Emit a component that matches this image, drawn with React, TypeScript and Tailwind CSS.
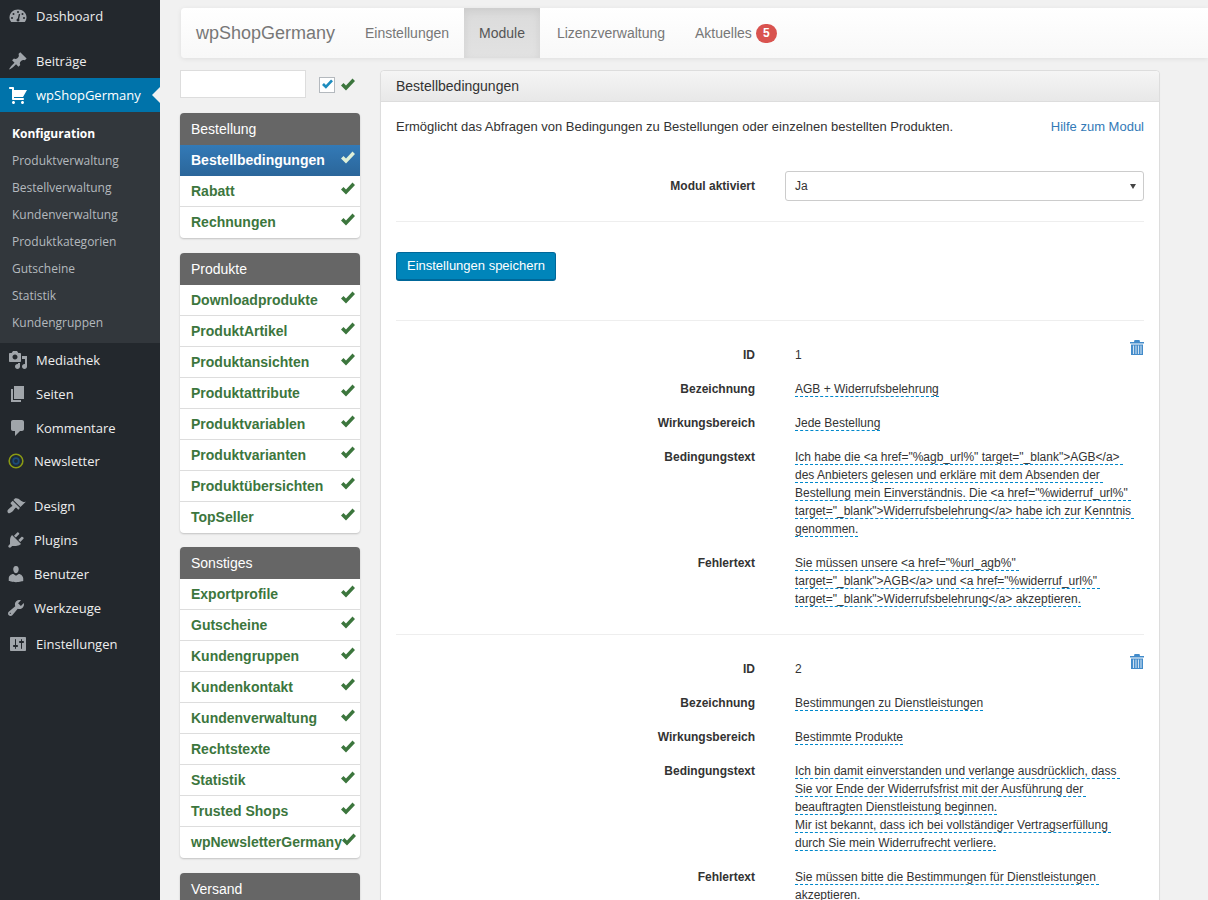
// App.tsx - wpShopGermany module settings page
import type { ReactNode } from "react";

// WordPress admin menu glyphs, 20x20 grid
const menuIcons: Record<string, string> = {
  post: "M10.44 3.02l1.82-1.82 6.36 6.35-1.83 1.82c-1.05-.68-2.48-.57-3.41.36l-.75.75c-.92.93-1.04 2.35-.35 3.41l-1.83 1.82-2.41-2.41-2.8 2.79c-.42.42-3.38 2.71-3.8 2.29s1.86-3.39 2.28-3.81l2.79-2.79L4.1 9.36l1.83-1.82c1.05.69 2.48.57 3.4-.36l.75-.75c.93-.92 1.05-2.35.36-3.41z",
  cart: "M6 13h9c.55 0 1 .45 1 1s-.45 1-1 1H5c-.55 0-1-.45-1-1V4H2c-.55 0-1-.45-1-1s.45-1 1-1h3c.55 0 1 .45 1 1v2h13l-4 7H6v1zm-.5 3c.83 0 1.5.67 1.5 1.5S6.33 19 5.5 19 4 18.33 4 17.5 4.67 16 5.5 16zm9 0c.83 0 1.5.67 1.5 1.5s-.67 1.5-1.5 1.5-1.5-.67-1.5-1.5.67-1.5 1.5-1.5z",
  media: "M13 11V4c0-.55-.45-1-1-1h-1.67L9 1H5L3.67 3H2c-.55 0-1 .45-1 1v7c0 .55.45 1 1 1h10c.55 0 1-.45 1-1zM7 4.5c1.38 0 2.5 1.12 2.5 2.5S8.38 9.5 7 9.5 4.5 8.38 4.5 7 5.62 4.5 7 4.5zM14 6h5v10.5c0 1.38-1.12 2.5-2.5 2.5S14 17.88 14 16.5s1.12-2.5 2.5-2.5c.17 0 .34.02.5.05V9h-3V6zm-4 8.05V13h2v3.5c0 1.38-1.12 2.5-2.5 2.5S7 17.88 7 16.5 8.12 14 9.5 14c.17 0 .34.02.5.05z",
  page: "M6 15V2h10v13H6zm-1 1h8v2H3V5h2v11z",
  comment: "M5 2h9c1.1 0 2 .9 2 2v7c0 1.1-.9 2-2 2h-2l-5 5v-5H5c-1.1 0-2-.9-2-2V4c0-1.1.9-2 2-2z",
  brush: "M14.48 11.06L7.41 3.99l1.5-1.5c.5-.56 2.3-.47 3.51.32 1.21.8 1.43 1.28 2.91 2.1 1.18.64 2.45 1.26 4.45.85zm-.71.71L6.7 4.7 4.93 6.47c-.39.39-.39 1.02 0 1.41l1.06 1.06c.39.39.39 1.03 0 1.42-.6.6-1.43 1.11-2.21 1.69-.35.26-.7.53-1.01.84C1.43 13.71.96 15.65 1.95 16.64c1 .99 2.93.52 4.78-1.33.31-.31.58-.66.84-1.01.58-.78 1.09-1.61 1.69-2.21.39-.39 1.02-.39 1.41 0l1.06 1.06c.39.39 1.02.39 1.41 0z",
  plug: "M13.11 4.36L9.87 7.6 8 5.73l3.24-3.24c.35-.34 1.05-.2 1.56.32.52.51.66 1.21.31 1.55zm-8 1.77l.91-1.12 9.01 9.01-1.19.84c-.71.71-2.63 1.16-3.82 1.16H6.14L4.9 17.26c-.59.59-1.54.59-2.12 0-.59-.58-.59-1.53 0-2.12l1.24-1.24v-3.88c0-1.13.4-3.19 1.09-3.89zm7.26 3.97l3.24-3.24c.34-.35 1.04-.21 1.55.31.52.51.66 1.21.31 1.55l-3.24 3.25z",
  user: "M10 9.25c-2.27 0-2.73-3.44-2.73-3.44C7 4.02 7.82 2 9.97 2c2.16 0 2.98 2.02 2.71 3.81 0 0-.41 3.44-2.68 3.44zm0 2.57L12.72 10c2.39 0 4.52 2.33 4.52 4.53v2.49s-3.65 1.13-7.24 1.13c-3.65 0-7.24-1.13-7.24-1.13v-2.49c0-2.25 1.94-4.48 4.59-4.48z",
  tools: "M16.68 9.77c-1.34 1.34-3.3 1.67-4.95.99l-5.41 6.52c-.99.99-2.59.99-3.57 0-.99-.98-.99-2.58 0-3.57l6.52-5.42c-.68-1.65-.35-3.61.99-4.95 1.28-1.28 3.12-1.62 4.72-1.06l-2.89 2.89 2.82 2.82 2.86-2.87c.53 1.58.18 3.39-1.09 4.65zM4.66 15.02c-.22-.22-.58-.22-.81 0-.22.22-.22.59 0 .81.23.23.59.23.81 0 .23-.22.23-.59 0-.81z",
  settings: "M18 16V4c0-.55-.45-1-1-1H3c-.55 0-1 .45-1 1v12c0 .55.45 1 1 1h14c.55 0 1-.45 1-1zM8 11h1c.55 0 1 .45 1 1s-.45 1-1 1H8v1.5c0 .28-.22.5-.5.5s-.5-.22-.5-.5V13H6c-.55 0-1-.45-1-1s.45-1 1-1h1V5.5c0-.28.22-.5.5-.5s.5.22.5.5V11zm5-2h-1c-.55 0-1-.45-1-1s.45-1 1-1h1V5.5c0-.28.22-.5.5-.5s.5.22.5.5V7h1c.55 0 1 .45 1 1s-.45 1-1 1h-1v5.5c0 .28-.22.5-.5.5s-.5-.22-.5-.5V9z",
};

function Glyph({ name, color = "#a0a5aa" }: { name: string; color?: string }) {
  return (
    <svg viewBox="0 0 20 20" className="w-[20px] h-[20px]" fill={color} fillRule="evenodd">
      <path d={menuIcons[name]} />
    </svg>
  );
}

function DashboardIcon() {
  return (
    <svg viewBox="0 0 20 20" className="w-[20px] h-[20px]">
      <path d="M3.2 16h13.6C18 14.5 18.500 12.800 18.500 11.500 18.500 6.800 14.700 3.500 10 3.500S1.500 6.800 1.500 11.500C1.500 12.800 2 14.500 3.200 16z" fill="#a0a5aa" />
      <circle cx="10" cy="6" r="1" fill="#23282d" />
      <circle cx="5.500" cy="8" r="1" fill="#23282d" />
      <circle cx="14.500" cy="8" r="1" fill="#23282d" />
      <circle cx="4" cy="12" r="1" fill="#23282d" />
      <circle cx="16" cy="12" r="1" fill="#23282d" />
      <path d="M11.500 8l-1.200 5.500" stroke="#23282d" strokeWidth="1.300" />
      <circle cx="10" cy="14" r="1.500" fill="#23282d" />
    </svg>
  );
}

function NewsletterIcon() {
  return (
    <svg viewBox="0 0 16 16" className="w-[16px] h-[16px]" fill="none">
      <circle cx="8" cy="8" r="6.800" stroke="#8a9a14" strokeWidth="1.600" />
      <circle cx="8" cy="8" r="5.500" fill="#1b2b3a" />
      <circle cx="8" cy="8" r="2.800" stroke="#1c4a78" strokeWidth="1.700" />
    </svg>
  );
}

function TrashIcon() {
  return (
    <svg viewBox="0 0 14 15" className="w-[14px] h-[15px]" fill="#428bca">
      <path d="M4.500 0h5l.5 2h4v1.500H0V2h4z" />
      <path d="M1 4.500h12V15H1z" />
      <path d="M3.500 5.500v8.500M6 5.500v8.500M8.500 5.500v8.500M11 5.500v8.500" stroke="#cfe2f3" strokeWidth="1.100" />
    </svg>
  );
}

function CheckMark({ color, width = 14 }: { color: string; width?: number }) {
  return (
    <svg viewBox="0 0 14 13" width={width} height={(width * 13) / 14} fill={color} className="shrink-0">
      <path d="M0 7.500L2.500 5 5 7.500 11.500.5 14 3 5 12.500z" />
    </svg>
  );
}

function MenuItem({ icon, label, iconLeft = "ml-[8px]" }: { icon: ReactNode; label: string; iconLeft?: string }) {
  return (
    <div className="h-[34px] flex items-center text-[13px] text-[#eeeeee]">
      <span className={`${iconLeft} mr-[8px] w-[20px] shrink-0 flex justify-center`}>{icon}</span>
      <span className="pt-[2px]">{label}</span>
    </div>
  );
}

const subItems = ["Produktverwaltung", "Bestellverwaltung", "Kundenverwaltung", "Produktkategorien", "Gutscheine", "Statistik", "Kundengruppen"];

function AdminSidebar() {
  return (
    <aside className="w-[160px] shrink-0 bg-[#23282d] font-['Open_Sans',sans-serif]">
      <div className="mt-[-1px]">
        <MenuItem icon={<DashboardIcon />} label="Dashboard" />
      </div>
      <div className="mt-[11px]">
        <MenuItem icon={<Glyph name="post" />} label="Beiträge" />
      </div>
      <div className="relative h-[34px] bg-[#0073aa] flex items-center text-[13px] text-white">
        <span className="ml-[8px] mr-[8px] w-[20px] shrink-0 flex justify-center">
          <Glyph name="cart" color="#ffffff" />
        </span>
        <span className="pt-[2px]">wpShopGermany</span>
        <span className="absolute right-0 top-[9px] w-0 h-0 border-y-[8px] border-y-transparent border-r-[8px] border-r-[#f1f1f1]" />
      </div>
      <div className="bg-[#32373c] py-[7px] pl-[12px] h-[231px]">
        <div className="h-[27px] pt-[2px] flex items-center text-[12px] font-bold text-white">Konfiguration</div>
        {subItems.map((s) => (
          <div key={s} className="h-[27px] pt-[2px] flex items-center text-[12px] text-[#b4b9be]">
            {s}
          </div>
        ))}
      </div>
      <MenuItem icon={<Glyph name="media" />} label="Mediathek" />
      <MenuItem icon={<Glyph name="page" />} label="Seiten" />
      <MenuItem icon={<Glyph name="comment" />} label="Kommentare" />
      <div className="mt-[-1px]">
        <MenuItem icon={<NewsletterIcon />} label="Newsletter" iconLeft="ml-[6px]" />
      </div>
      <div className="mt-[11px]">
        <MenuItem icon={<Glyph name="brush" />} label="Design" iconLeft="ml-[6px]" />
      </div>
      <MenuItem icon={<Glyph name="plug" />} label="Plugins" iconLeft="ml-[6px]" />
      <MenuItem icon={<Glyph name="user" />} label="Benutzer" iconLeft="ml-[6px]" />
      <MenuItem icon={<Glyph name="tools" />} label="Werkzeuge" iconLeft="ml-[6px]" />
      <div className="mt-[2px]">
        <MenuItem icon={<Glyph name="settings" />} label="Einstellungen" />
      </div>
    </aside>
  );
}

function TopNav() {
  return (
    <nav className="ml-[21px] h-[50px] flex items-center rounded-l-[4px] bg-gradient-to-b from-white to-[#f8f8f8] shadow-[0_1px_5px_rgba(0,0,0,0.08)] text-[14px] text-[#777777]">
      <span className="pl-[15px] w-[169px] text-[18px]">wpShopGermany</span>
      <span className="w-[114px] text-center">Einstellungen</span>
      <span className="w-[76px] h-full flex items-center justify-center bg-gradient-to-b from-[#dbdbdb] to-[#e2e2e2] shadow-[inset_0_3px_9px_rgba(0,0,0,0.075)] text-[#555555]">
        Module
      </span>
      <span className="ml-[2px] w-[138px] text-center">Lizenzverwaltung</span>
      <span className="ml-[15px] flex items-center gap-[4px]">
        Aktuelles
        <span className="h-[19px] min-w-[21px] px-[7px] rounded-[10px] bg-[#d9534f] text-white text-[12px] font-bold flex items-center justify-center">5</span>
      </span>
    </nav>
  );
}

const moduleGroups = [
  { title: "Bestellung", offset: "", items: ["Bestellbedingungen", "Rabatt", "Rechnungen"] },
  {
    title: "Produkte",
    offset: "",
    items: ["Downloadprodukte", "ProduktArtikel", "Produktansichten", "Produktattribute", "Produktvariablen", "Produktvarianten", "Produktübersichten", "TopSeller"],
  },
  {
    title: "Sonstiges",
    offset: "mt-[-1px]",
    items: ["Exportprofile", "Gutscheine", "Kundengruppen", "Kundenkontakt", "Kundenverwaltung", "Rechtstexte", "Statistik", "Trusted Shops", "wpNewsletterGermany"],
  },
  { title: "Versand", offset: "", items: ["Versandarten"] },
];

function ModuleList() {
  return (
    <div className="w-[180px] shrink-0">
      <div className="h-[28px] flex items-center">
        <input className="w-[126px] h-[28px] bg-white border border-[#dddddd]" />
        <span className="ml-[13px] mt-[1px] w-[16px] h-[16px] border border-[#b4b9be] bg-white flex items-center justify-center">
          <CheckMark color="#1e8cbe" width={11} />
        </span>
        <span className="ml-[6px]">
          <CheckMark color="#3c763d" />
        </span>
      </div>
      <div className="mt-[15px] flex flex-col gap-[15px]">
        {moduleGroups.map((g) => (
          <div key={g.title} className={`${g.offset} rounded-[4px] bg-white shadow-[0_1px_2px_rgba(0,0,0,0.2)]`}>
            <div className="h-[32px] px-[11px] flex items-center rounded-t-[4px] bg-[#666666] text-white text-[14px]">{g.title}</div>
            {g.items.map((item) => {
              const active = item === "Bestellbedingungen";
              return (
                <div
                  key={item}
                  className={
                    active
                      ? "h-[31px] pl-[11px] pr-[5px] flex items-center justify-between whitespace-nowrap bg-gradient-to-b from-[#337ab7] to-[#2b669a] text-white font-bold text-[14px]"
                      : "h-[31px] pl-[11px] pr-[5px] flex items-center justify-between whitespace-nowrap border-b border-[#dddddd] last:border-b-0 text-[#3c763d] font-bold text-[14px]"
                  }
                >
                  <span>{item}</span>
                  <span className="mb-[6px]">
                    <CheckMark color={active ? "#dff0d8" : "#3c763d"} />
                  </span>
                </div>
              );
            })}
          </div>
        ))}
      </div>
    </div>
  );
}

function Editable({ children }: { children: ReactNode }) {
  return <span className="border-b border-dashed border-[#0088cc] whitespace-pre-wrap">{children}</span>;
}

function FieldRow({ label, children }: { label: string; children: ReactNode }) {
  return (
    <div className="flex mb-[16px] text-[12px] leading-[18px]">
      <div className="w-[359px] shrink-0 text-right font-bold text-[#333333]">{label}</div>
      <div className="ml-[40px] w-[340px] text-[#333333]">{children}</div>
    </div>
  );
}

const conditions = [
  {
    id: "1",
    name: "AGB + Widerrufsbelehrung",
    scope: "Jede Bestellung",
    text: 'Ich habe die <a href="%agb_url%" target="_blank">AGB</a> des Anbieters gelesen und erkläre mit dem Absenden der Bestellung mein Einverständnis. Die <a href="%widerruf_url%" target="_blank">Widerrufsbelehrung</a> habe ich zur Kenntnis genommen.',
    error: 'Sie müssen unsere <a href="%url_agb%" target="_blank">AGB</a> und <a href="%widerruf_url%" target="_blank">Widerrufsbelehrung</a> akzeptieren.',
  },
  {
    id: "2",
    name: "Bestimmungen zu Dienstleistungen",
    scope: "Bestimmte Produkte",
    text: "Ich bin damit einverstanden und verlange ausdrücklich, dass Sie vor Ende der Widerrufsfrist mit der Ausführung der beauftragten Dienstleistung beginnen.\nMir ist bekannt, dass ich bei vollständiger Vertragserfüllung durch Sie mein Widerrufrecht verliere.",
    error: "Sie müssen bitte die Bestimmungen für Dienstleistungen akzeptieren.",
  },
];

function ModulePanel() {
  return (
    <section className="w-[780px] shrink-0 bg-white border border-[#dddddd] rounded-t-[4px] shadow-[0_1px_1px_rgba(0,0,0,0.05)]">
      <div className="h-[31px] px-[15px] flex items-center rounded-t-[4px] bg-gradient-to-b from-[#f5f5f5] to-[#e8e8e8] border-b border-[#dddddd] text-[14px] text-[#333333]">
        Bestellbedingungen
      </div>
      <div className="px-[15px]">
        <div className="mt-[16px] h-[18px] flex justify-between text-[13px] leading-[18px] text-[#333333]">
          <span>Ermöglicht das Abfragen von Bedingungen zu Bestellungen oder einzelnen bestellten Produkten.</span>
          <span className="text-[#337ab7]">Hilfe zum Modul</span>
        </div>
        <div className="mt-[35px] flex items-center text-[12px] text-[#333333]">
          <div className="w-[359px] text-right font-bold">Modul aktiviert</div>
          <div className="ml-[30px] flex-1 h-[30px] pl-[9px] pr-[7px] flex items-center justify-between border border-[#cccccc] rounded-[3px] bg-white">
            <span>Ja</span>
            <span className="w-0 h-0 border-x-[3px] border-x-transparent border-t-[5px] border-t-[#444444]" />
          </div>
        </div>
        <hr className="mt-[20px] border-[#eeeeee]" />
        <button className="mt-[30px] block h-[29px] w-[160px] rounded-[3px] bg-[#0085ba] border border-[#006799] border-b-2 text-white text-[13px]">
          Einstellungen speichern
        </button>
        <hr className="mt-[39px] border-[#eeeeee]" />
        {conditions.map((c) => (
          <div key={c.id} className="relative pt-[25px] pb-[10px] border-b border-[#eeeeee] last:border-b-0">
            <span className="absolute right-0 top-[19px]">
              <TrashIcon />
            </span>
            <FieldRow label="ID">{c.id}</FieldRow>
            <FieldRow label="Bezeichnung">
              <Editable>{c.name}</Editable>
            </FieldRow>
            <FieldRow label="Wirkungsbereich">
              <Editable>{c.scope}</Editable>
            </FieldRow>
            <FieldRow label="Bedingungstext">
              <Editable>{c.text}</Editable>
            </FieldRow>
            <FieldRow label="Fehlertext">
              <Editable>{c.error}</Editable>
            </FieldRow>
          </div>
        ))}
      </div>
    </section>
  );
}

export default function App() {
  return (
    <div className="h-[900px] overflow-hidden flex bg-[#f1f1f1] font-['Liberation_Sans',Arial,sans-serif]">
      <AdminSidebar />
      <main className="flex-1 min-w-0 pt-[8px]">
        <TopNav />
        <div className="mt-[12px] ml-[20px] flex gap-[20px]">
          <ModuleList />
          <ModulePanel />
        </div>
      </main>
    </div>
  );
}
